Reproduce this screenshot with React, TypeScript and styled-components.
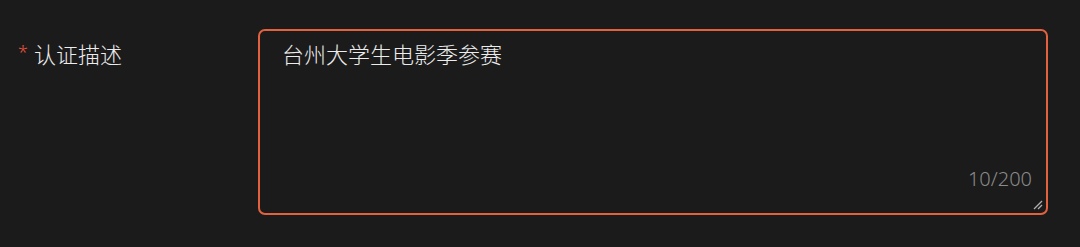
import React, { useState } from "react";
import styled, { createGlobalStyle } from "styled-components";

const Global = createGlobalStyle`
  html, body {
    margin: 0;
    padding: 0;
    background: #1b1b1b;
  }
  body {
    font-family: "Noto Sans", "Noto Sans CJK SC", sans-serif;
  }
`;

const Page = styled.div`
  width: 1080px;
  height: 247px;
  box-sizing: border-box;
  padding: 29px 32px 0 18px;
  background: #1b1b1b;
`;

const FormRow = styled.div`
  display: flex;
  align-items: flex-start;
`;

const Label = styled.label`
  width: 240px;
  flex: none;
  display: flex;
  align-items: flex-start;
  margin-top: 8px;
  font-family: "Noto Sans CJK SC", sans-serif;
  font-weight: 300;
  font-size: 22px;
  line-height: 33px;
  color: #ececec;
`;

const Required = styled.span`
  color: #e5533f;
  font-family: "Noto Sans", sans-serif;
  font-size: 18px;
  line-height: 22px;
  margin-right: 6px;
  margin-top: 4px;
`;

const Field = styled.div`
  position: relative;
  width: 790px;
  height: 186px;
  box-sizing: border-box;
  border: 2px solid #e4613f;
  border-radius: 7px;
  background: #1b1b1b;
`;

const Area = styled.textarea`
  display: block;
  width: 100%;
  height: 100%;
  box-sizing: border-box;
  margin: 0;
  padding: 6px 22px;
  border: none;
  outline: none;
  resize: none;
  background: transparent;
  color: #ececec;
  font-family: "Noto Sans CJK SC", sans-serif;
  font-weight: 300;
  font-size: 22px;
  line-height: 33px;
`;

const Counter = styled.span`
  position: absolute;
  right: 14px;
  bottom: 24px;
  font-family: "Noto Sans", sans-serif;
  font-weight: 300;
  font-size: 20px;
  line-height: 20px;
  color: #8a8a8a;
`;

const Handle = styled.svg`
  position: absolute;
  right: 3px;
  bottom: 3px;
  width: 10px;
  height: 10px;
`;

export default function App() {
  const [value, setValue] = useState("台州大学生电影季参赛");
  return (
    <Page>
      <Global />
      <FormRow>
        <Label htmlFor="desc">
          <Required>*</Required>
          认证描述
        </Label>
        <Field>
          <Area
            id="desc"
            value={value}
            maxLength={200}
            onChange={(e) => setValue(e.target.value)}
          />
          <Counter>{value.length}/200</Counter>
          <Handle viewBox="0 0 10 10">
            <line x1="1" y1="9" x2="9" y2="1" stroke="#b0b0b0" strokeWidth="1.3" />
            <line x1="5" y1="9" x2="9" y2="5" stroke="#b0b0b0" strokeWidth="1.3" />
          </Handle>
        </Field>
      </FormRow>
    </Page>
  );
}
